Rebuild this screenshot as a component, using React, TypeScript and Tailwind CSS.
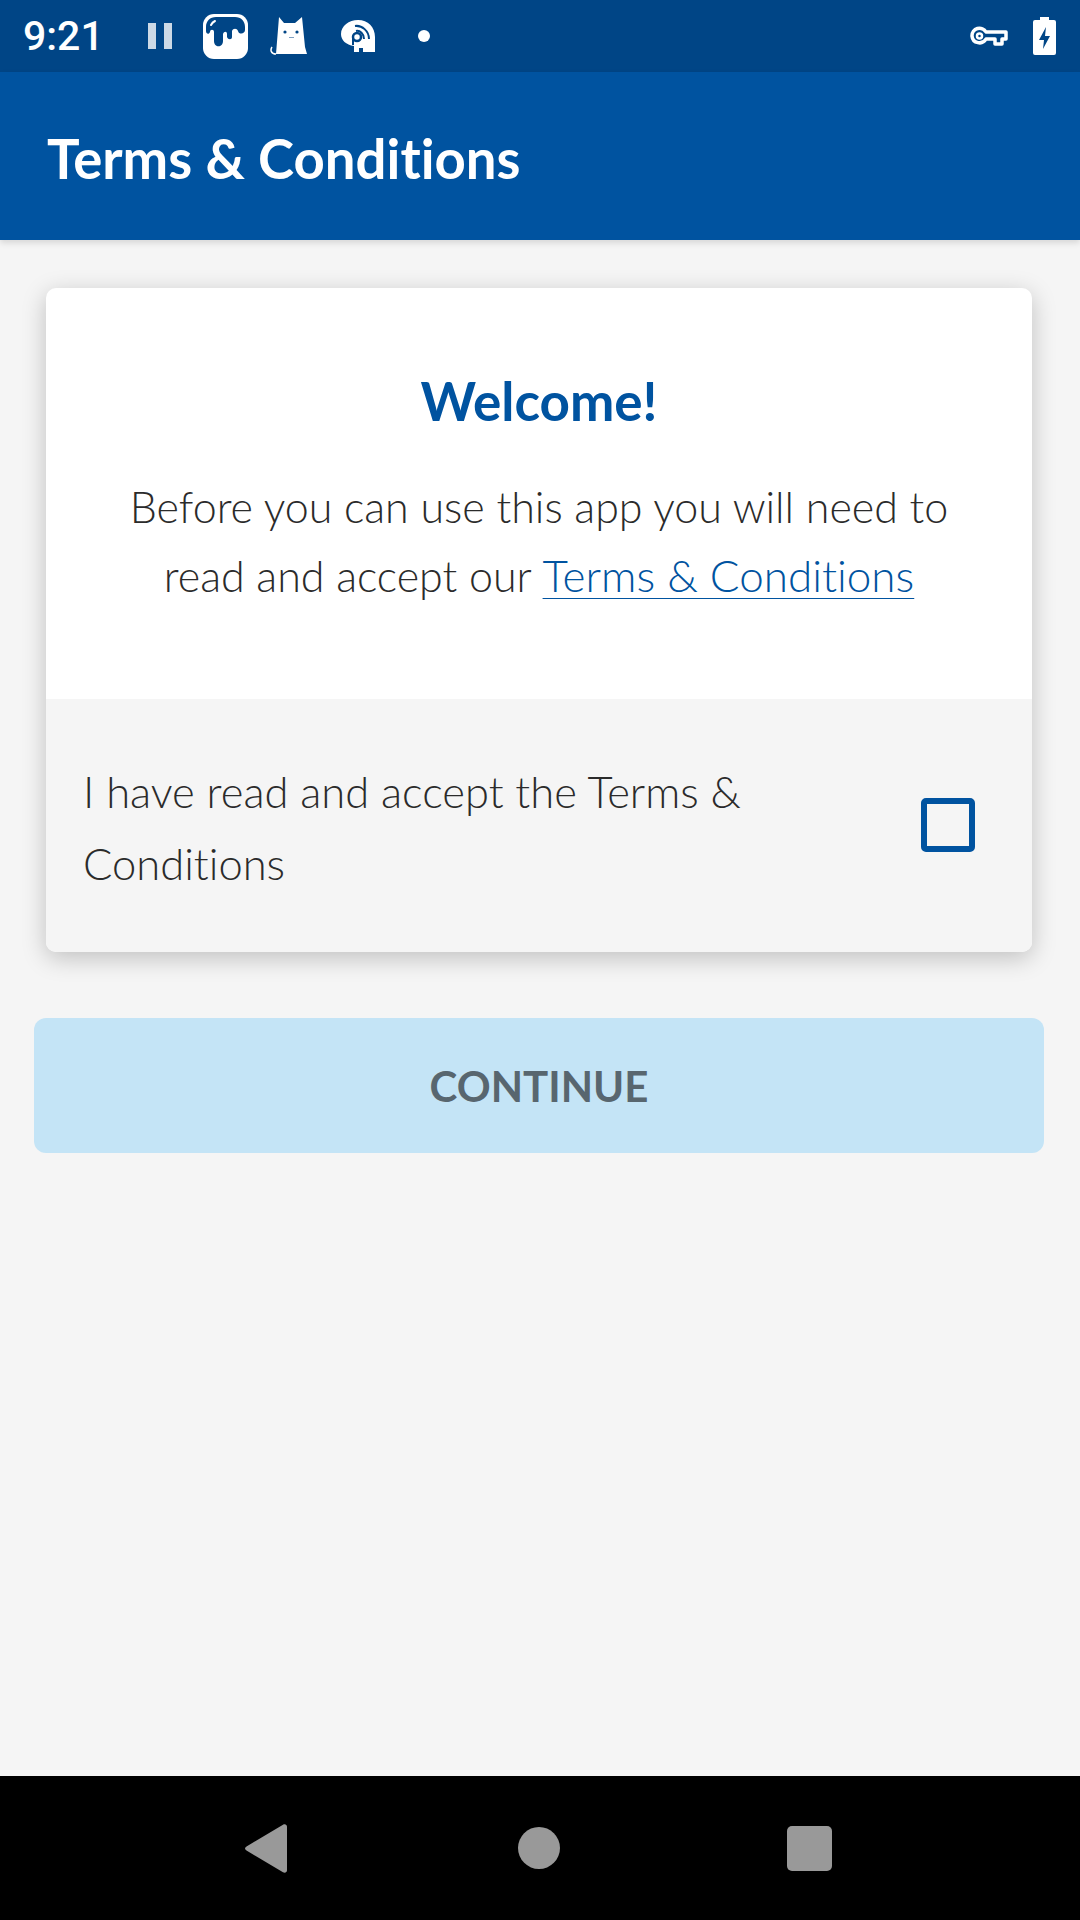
export default function App() {
  return (
    <div className="flex h-[1920px] w-[1080px] flex-col overflow-hidden bg-[#f5f5f5] font-['Lato',sans-serif] [font-variant-ligatures:none]">
      {/* Status bar */}
      <div className="flex h-[72px] shrink-0 items-center bg-[#004586] pl-[23px] pr-[24px] text-white">
        <span className="w-[80px] font-['Roboto',sans-serif] text-[41px] font-medium leading-none">9:21</span>
        <svg className="ml-[45px] opacity-80" width="24" height="26" viewBox="0 0 24 26" fill="#fff">
          <rect x="0" y="0" width="8" height="26" />
          <rect x="16" y="0" width="8" height="26" />
        </svg>
        <svg className="ml-[31px]" width="45" height="45" viewBox="0 0 45 45">
          <rect width="45" height="45" rx="11" fill="#fff" />
          <path
            d="M3 13c0-6 4-10 10-10h19c6 0 10 4 10 10v3c0 4-6 5-7 1-1-3-5-3-6 0v6c0 3-4 3-5 0v-3c0-3-3-3-4 0v7c0 7-9 7-9 0v-9c0-3-4-3-4 0-1 3-4 2-4-1z"
            fill="#004586"
          />
          <path d="M8 11c1-2 2-3 4-4" stroke="#fff" strokeWidth="2" fill="none" strokeLinecap="round" />
        </svg>
        <svg className="ml-[22px]" width="39" height="38" viewBox="0 0 39 38">
          <path d="M9 0l5 6h11l7-6 3 30 2 7H6z" fill="#fff" />
          <path d="M6 37c-5 0-6-4-4-7" stroke="#fff" strokeWidth="1.5" fill="none" />
          <circle cx="15" cy="15" r="1.6" fill="#004586" />
          <circle cx="27" cy="15" r="1.6" fill="#004586" />
          <rect x="19" y="20" width="5" height="1" fill="#7f9fc0" />
        </svg>
        <svg className="ml-[32px]" width="34" height="32" viewBox="0 0 34 32">
          <path d="M17 0c10 0 17 7 17 17v15H22v-4h-4v4h-5v-6C5 25 0 20 0 14 0 6 8 0 17 0z" fill="#fff" />
          <path d="M12 25v-7M14 6c7-1 14 5 14 13M15 11c4-1 8 3 8 8" stroke="#004586" strokeWidth="2" fill="none" />
          <circle cx="16" cy="17" r="4" fill="none" stroke="#004586" strokeWidth="2.5" />
        </svg>
        <div className="ml-[43px] h-[12px] w-[12px] rounded-full bg-white" />
        <div className="flex-1" />
        <svg width="38" height="20" viewBox="0 0 38 20" fill="none">
          <path
            d="M2 10a7.5 7.5 0 0 1 14-4h20v7h-4v5h-7v-5h-9a7.5 7.5 0 0 1-14-3z"
            stroke="#fff"
            strokeWidth="3.5"
            strokeLinejoin="round"
          />
          <circle cx="9.5" cy="10" r="2.5" stroke="#fff" strokeWidth="2.5" />
        </svg>
        <svg className="ml-[25px]" width="23" height="38" viewBox="0 0 23 38">
          <path d="M7 0h9v3h5a2 2 0 0 1 2 2v31a2 2 0 0 1-2 2H2a2 2 0 0 1-2-2V5a2 2 0 0 1 2-2h5z" fill="#fff" />
          <path d="M13 10l-7 13h5l-1 9 7-13h-5z" fill="#004586" />
        </svg>
      </div>

      {/* App bar */}
      <div className="z-10 flex h-[168px] shrink-0 items-center bg-[#0053a0] pl-[47px] pt-[4px] shadow-[0_3px_6px_rgba(0,0,0,0.12)]">
        <h1 className="text-[54.5px] font-bold leading-none text-white">Terms &amp; Conditions</h1>
      </div>

      {/* Content */}
      <main className="flex flex-1 flex-col">
        <div className="ml-[46px] mr-[48px] mt-[48px] overflow-hidden rounded-[10px] bg-white shadow-[0_6px_24px_rgba(0,0,0,0.22)]">
          <div className="flex h-[411px] flex-col items-center pt-[81px] text-center">
            <h2 className="text-[53px] font-bold leading-[64px] text-[#0053a0]">Welcome!</h2>
            <p className="mt-[40px] text-[43px] font-light leading-[68px] text-[#2b2b2b]">
              Before you can use this app you will need to
              <br />
              read and accept our{' '}
              <a className="text-[44px] text-[#0053a0] underline decoration-1 underline-offset-[6px]">Terms &amp; Conditions</a>
            </p>
          </div>
          <div className="flex h-[253px] items-center bg-[#f5f5f5] pl-[37px] pr-[57px] pt-[2px]">
            <p className="w-[700px] text-[43.5px] font-light leading-[72px] text-[#2b2b2b]">
              I have read and accept the Terms &amp; Conditions
            </p>
            <div className="mb-[4px] ml-auto h-[54px] w-[54px] rounded-[5px] border-[6px] border-[#0053a0]" />
          </div>
        </div>
        <button className="ml-[34px] mr-[36px] mt-[66px] flex h-[135px] items-center justify-center rounded-[12px] bg-[#c4e4f6] pt-[2px] text-[42px] font-bold text-[#58666f]">
          CONTINUE
        </button>
      </main>

      {/* Nav bar */}
      <div className="flex h-[144px] shrink-0 items-center bg-black pl-[245px]">
        <svg width="42" height="49" viewBox="0 0 42 49" fill="#999">
          <path d="M38 .7c2-1.2 4 0 4 2v43.6c0 2-2 3.2-4 2L1.5 26.5c-2-1.2-2-2.8 0-4z" />
        </svg>
        <div className="ml-[231px] h-[42px] w-[42px] rounded-full bg-[#999]" />
        <div className="ml-[227px] h-[45px] w-[45px] rounded-[5px] bg-[#999]" />
      </div>
    </div>
  );
}
